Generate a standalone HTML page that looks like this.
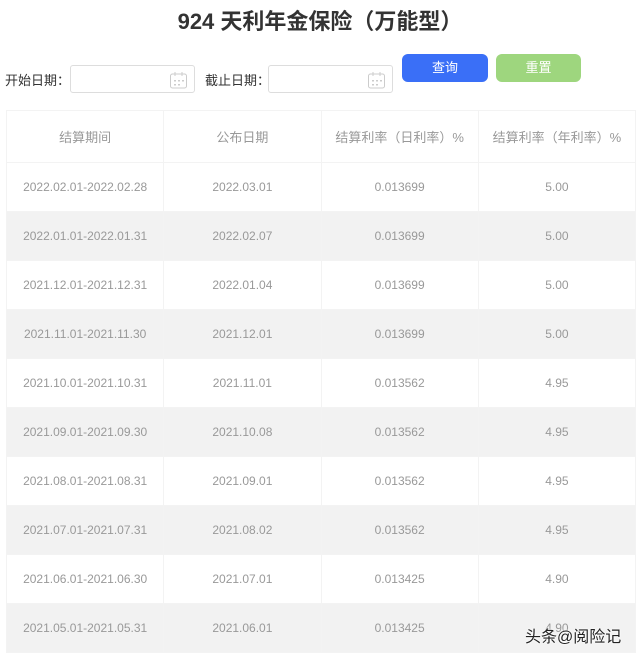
<!DOCTYPE html>
<html><head><meta charset="utf-8"><style>
body{margin:0;width:640px;height:657px;background:#fff;font-family:"Liberation Sans","Noto Sans CJK SC",sans-serif;overflow:hidden;position:relative}
h1{position:absolute;top:6px;left:0;width:640px;margin:0;text-align:center;font-size:22px;font-weight:bold;color:#333;line-height:32px}
.lbl{position:absolute;top:70px;font-size:13px;color:#333}
.inp{position:absolute;top:65px;width:125px;height:28px;border:1px solid #ddd;border-radius:3px;box-sizing:border-box}
.inp svg{position:absolute;right:6px;top:5px}
.btn{position:absolute;top:54px;width:86px;height:28px;border-radius:6px;color:#fff;font-size:13px;text-align:center;line-height:28px}
table{position:absolute;left:6px;top:110px;width:630px;border-collapse:collapse;table-layout:fixed}
td{border:1px solid #f3f3f3;text-align:center;font-size:12px;color:#999;height:48px;padding:0}
tr.h td{height:51px;font-size:13px}
tr:nth-child(odd):not(.h) td{background:#f2f2f2}
.wm{position:absolute;left:525px;top:623px;font-size:16px;color:#222;text-shadow:0 0 2px #fff,0 0 2px #fff}
</style></head><body>
<h1>924 天利年金保险（万能型）</h1>
<div class="lbl" style="left:5px">开始日期：</div>
<div class="inp" style="left:70px"><svg width="19" height="19" viewBox="0 0 19 19"><rect x="1.5" y="3" width="16" height="14" rx="2" fill="none" stroke="#ccc"/><line x1="6" y1="1" x2="6" y2="5" stroke="#ccc"/><line x1="13" y1="1" x2="13" y2="5" stroke="#ccc"/><g fill="#ccc"><rect x="5" y="9" width="2" height="1.5"/><rect x="9" y="9" width="2" height="1.5"/><rect x="13" y="9" width="2" height="1.5"/><rect x="5" y="13" width="2" height="1.5"/><rect x="9" y="13" width="2" height="1.5"/></g></svg></div>
<div class="lbl" style="left:205px">截止日期：</div>
<div class="inp" style="left:268px"><svg width="19" height="19" viewBox="0 0 19 19"><rect x="1.5" y="3" width="16" height="14" rx="2" fill="none" stroke="#ccc"/><line x1="6" y1="1" x2="6" y2="5" stroke="#ccc"/><line x1="13" y1="1" x2="13" y2="5" stroke="#ccc"/><g fill="#ccc"><rect x="5" y="9" width="2" height="1.5"/><rect x="9" y="9" width="2" height="1.5"/><rect x="13" y="9" width="2" height="1.5"/><rect x="5" y="13" width="2" height="1.5"/><rect x="9" y="13" width="2" height="1.5"/></g></svg></div>
<div class="btn" style="left:402px;background:#3a6ff7">查询</div>
<div class="btn" style="left:496px;width:85px;background:#9ed67e">重置</div>
<table>
<tr class="h"><td>结算期间</td><td>公布日期</td><td>结算利率（日利率）%</td><td>结算利率（年利率）%</td></tr>
<tr><td>2022.02.01-2022.02.28</td><td>2022.03.01</td><td>0.013699</td><td>5.00</td></tr>
<tr><td>2022.01.01-2022.01.31</td><td>2022.02.07</td><td>0.013699</td><td>5.00</td></tr>
<tr><td>2021.12.01-2021.12.31</td><td>2022.01.04</td><td>0.013699</td><td>5.00</td></tr>
<tr><td>2021.11.01-2021.11.30</td><td>2021.12.01</td><td>0.013699</td><td>5.00</td></tr>
<tr><td>2021.10.01-2021.10.31</td><td>2021.11.01</td><td>0.013562</td><td>4.95</td></tr>
<tr><td>2021.09.01-2021.09.30</td><td>2021.10.08</td><td>0.013562</td><td>4.95</td></tr>
<tr><td>2021.08.01-2021.08.31</td><td>2021.09.01</td><td>0.013562</td><td>4.95</td></tr>
<tr><td>2021.07.01-2021.07.31</td><td>2021.08.02</td><td>0.013562</td><td>4.95</td></tr>
<tr><td>2021.06.01-2021.06.30</td><td>2021.07.01</td><td>0.013425</td><td>4.90</td></tr>
<tr><td>2021.05.01-2021.05.31</td><td>2021.06.01</td><td>0.013425</td><td>4.90</td></tr>
</table>
<div class="wm">头条@阅险记</div>
</body></html>
